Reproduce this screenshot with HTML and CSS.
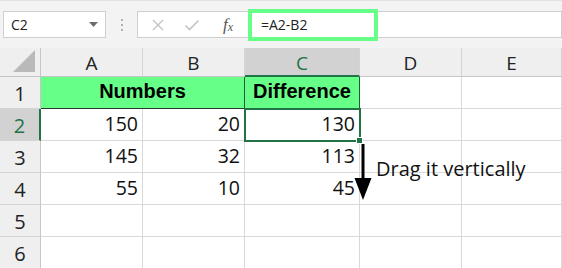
FILE: index.html
```
<!DOCTYPE html>
<html>
<head>
<meta charset="utf-8">
<link rel="stylesheet" href="styles.css">
</head>
<body>
<div class="app">
  <div class="toolbar">
    <div class="namebox">
      <span class="name">C2</span>
      <svg class="dd" width="9" height="5" viewBox="0 0 9 5"><path d="M0 0h9L4.5 5z" fill="#6e6e6e"/></svg>
    </div>
    <div class="dots"><i></i><i></i><i></i></div>
    <div class="fbtns">
      <svg class="ic" width="14" height="14" viewBox="0 0 14 14"><path d="M2 2l10 10M12 2L2 12" stroke="#c4c4c4" stroke-width="1.4" fill="none"/></svg>
      <svg class="ic" width="16" height="14" viewBox="0 0 16 14"><path d="M1.5 7.5l4 4L14.5 2.5" stroke="#c4c4c4" stroke-width="1.6" fill="none"/></svg>
      <span class="fx">f<sub>x</sub></span>
    </div>
    <div class="formula">=A2-B2</div>
    <div class="fbar"></div>
  </div>
  <div class="sheet">
    <div class="hd corner"><svg width="22" height="22" viewBox="0 0 22 22"><path d="M22 0V22H0z" fill="#b9b9b9"/></svg></div>
    <div class="hd col">A</div>
    <div class="hd col">B</div>
    <div class="hd col sel-col">C</div>
    <div class="hd col">D</div>
    <div class="hd col">E</div>

    <div class="hd row">1</div>
    <div class="c green merged">Numbers</div>
    <div class="c green diff">Difference</div>
    <div class="c"></div>
    <div class="c"></div>

    <div class="hd row sel-row">2</div>
    <div class="c num">150</div>
    <div class="c num">20</div>
    <div class="c num active">130<span class="handle"></span></div>
    <div class="c"></div>
    <div class="c"></div>

    <div class="hd row">3</div>
    <div class="c num">145</div>
    <div class="c num">32</div>
    <div class="c num">113</div>
    <div class="c"></div>
    <div class="c"></div>

    <div class="hd row">4</div>
    <div class="c num">55</div>
    <div class="c num">10</div>
    <div class="c num">45</div>
    <div class="c"></div>
    <div class="c"></div>

    <div class="hd row">5</div>
    <div class="c"></div>
    <div class="c"></div>
    <div class="c"></div>
    <div class="c"></div>
    <div class="c"></div>

    <div class="hd row">6</div>
    <div class="c"></div>
    <div class="c"></div>
    <div class="c"></div>
    <div class="c"></div>
    <div class="c"></div>

    <svg class="arrow" width="20" height="60" viewBox="0 0 20 60"><path d="M10 0V40" stroke="#000" stroke-width="3"/><path d="M1.5 34L18.5 34L10 56z" fill="#000"/></svg>
    <div class="note">Drag it vertically</div>
  </div>
</div>
</body>
</html>
```
FILE: styles.css
```
* { box-sizing: border-box; }
html, body { margin: 0; padding: 0; }
body { width: 562px; height: 268px; overflow: hidden; background: #fff; font-family: "Open Sans", "Noto Sans", sans-serif; }
.app { width: 562px; height: 268px; overflow: hidden; }

.toolbar {
  height: 48px; background: #f3f3f3; border-top: 1px solid #e2e2e2;
  display: flex; align-items: center; padding-left: 3px; position: relative;
}
.namebox {
  width: 103px; height: 27px; background: #fff; border: 1px solid #cfcfcf;
  display: flex; align-items: center; justify-content: space-between;
  padding: 0 7px 0 7px;
}
.name { font-size: 14px; color: #222; }
.dots { width: 31px; display: flex; flex-direction: column; align-items: center; gap: 3px; }
.dots i { width: 2px; height: 2px; background: #b0b0b0; display: block; }
.fbtns {
  width: 112px; height: 27px; background: #fff; border: 1px solid #cfcfcf;
  display: flex; align-items: center; padding-left: 13px; gap: 19px;
}
.fx { font-family: "Liberation Serif", serif; font-style: italic; font-size: 17px; color: #555; margin-left: 4px; }
.fx sub { font-size: 12px; vertical-align: -1px; }
.formula {
  width: 130px; height: 32px; border: 4px solid #66ff88; background: #fff;
  font-size: 14px; color: #222; display: flex; align-items: center; padding-left: 9px;
  margin-left: -1px;
}
.fbar { flex: 1; height: 27px; background: #fff; border: 1px solid #cfcfcf; border-left: none; }

.sheet {
  display: grid; position: relative;
  grid-template-columns: 41px 102px 102px 115px 102px 100px;
  grid-template-rows: 29px repeat(6, 32px);
}
.hd {
  background: #efefef; color: #222; display: flex; align-items: center; justify-content: center;
  font-size: 19px; border-right: 1px solid #d4d4d4; border-bottom: 1px solid #c6c6c6;
}
.col { padding-top: 2px; }
.corner { align-items: flex-end; justify-content: flex-end; padding: 0 5px 4px 0; border-right: 1px solid #c6c6c6; }
.row { font-size: 20px; border-right: 1px solid #c6c6c6; border-bottom: 1px solid #d4d4d4; padding-top: 2px; }
.sel-col { background: #d2d2d2; color: #217346; border-bottom: 2px solid #217346; }
.sel-row { background: #d2d2d2; color: #217346; border-right: 2px solid #217346; }

.c {
  border-right: 1px solid #d9d9d9; border-bottom: 1px solid #d9d9d9;
  font-size: 19.5px; color: #111; display: flex; align-items: flex-end; padding-bottom: 3px;
  position: relative;
}
.num { justify-content: flex-end; padding-right: 4px; }
.green {
  background: #66ff88; font-family: "Liberation Sans", Arial, sans-serif; font-weight: bold;
  font-size: 20px; color: #000; justify-content: center; padding-bottom: 5px;
}
.merged { grid-column: span 2; border-bottom: 1px solid #2a3a2e; }
.diff { border: 1px solid #1f5c38; border-top: none; margin-left: -1px; }
.active { outline: 2px solid #217346; outline-offset: -1px; z-index: 2; }
.handle {
  position: absolute; right: -4px; bottom: -4px; width: 7px; height: 7px;
  background: #217346; border: 1px solid #fff;
}
.arrow { position: absolute; left: 353px; top: 96px; z-index: 3; }
.note {
  position: absolute; left: 376px; top: 107px; font-size: 20px; color: #111; z-index: 3;
  font-family: "Open Sans", sans-serif;
}
```
